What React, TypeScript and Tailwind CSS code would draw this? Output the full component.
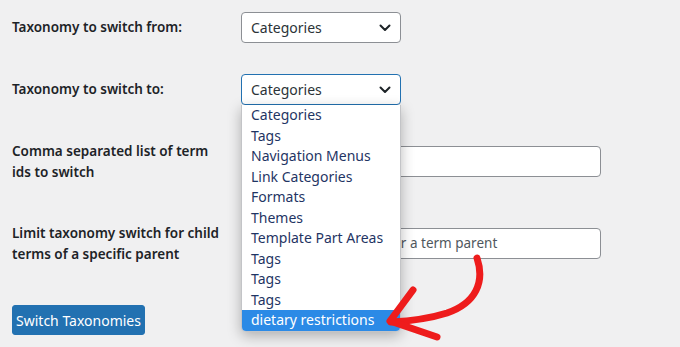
import React from "react";

const options = [
  "Categories",
  "Tags",
  "Navigation Menus",
  "Link Categories",
  "Formats",
  "Themes",
  "Template Part Areas",
  "Tags",
  "Tags",
  "Tags",
  "dietary restrictions",
];

const Chevron = () => (
  <svg width="12" height="8" viewBox="0 0 12 8" fill="none">
    <path d="M1.5 1.5 6 6l4.5-4.5" stroke="#1d2327" strokeWidth="2" strokeLinecap="round" strokeLinejoin="round" />
  </svg>
);

const Select = ({ focused }: { focused?: boolean }) => (
  <div
    className={
      focused
        ? "flex h-[31px] w-[160px] items-center justify-between rounded-[4px] border-[1.5px] border-[#2271b1] bg-white pl-[9px] pr-[9px] text-[14px] text-[#2c3338]"
        : "flex h-[31px] w-[160px] items-center justify-between rounded-[4px] border border-[#8c8f94] bg-white pl-[9px] pr-[9px] text-[14px] text-[#2c3338]"
    }
  >
    <span>Categories</span>
    <Chevron />
  </div>
);

const Row = ({ label, children, className }: { label: React.ReactNode; children: React.ReactNode; className: string }) => (
  <div className={"flex items-center " + className}>
    <div className="w-[229px] text-[13.5px] font-semibold leading-[20.5px] text-[#1d2327]">{label}</div>
    {children}
  </div>
);

export default function App() {
  return (
    <div
      className="relative h-[347px] w-[680px] overflow-hidden bg-[#f0f0f1] pl-[12px] pt-[12px]"
      style={{ fontFamily: '"Noto Sans", "Open Sans", sans-serif' }}
    >
      <Row label="Taxonomy to switch from:" className="h-[31px]">
        <Select />
      </Row>
      <Row label="Taxonomy to switch to:" className="mt-[31px] h-[31px]">
        <Select focused />
      </Row>
      <Row label={<>Comma separated list of term<br />ids to switch</>} className="mt-[36px] h-[41px]">
        <div className="h-[31px] w-[360px] rounded-[4px] border border-[#8c8f94] bg-white" />
      </Row>
      <Row label={<>Limit taxonomy switch for child<br />terms of a specific parent</>} className="mt-[41px] h-[41px]">
        <div className="flex h-[31px] w-[360px] items-center overflow-hidden whitespace-nowrap rounded-[4px] border border-[#8c8f94] bg-white pl-[19px] text-[13.5px] text-[#50575e]">
          Enter the ID or slug for a term parent
        </div>
      </Row>
      <button className="mt-[41px] h-[30px] w-[133px] rounded-[3px] border border-[#2271b1] bg-[#2271b1] text-[14px] text-white">
        Switch Taxonomies
      </button>

      <ul className="absolute left-[241px] top-[105px] w-[160px] overflow-hidden rounded-b-[5px] border border-t-0 border-[#c3c4c7] bg-white text-[14px] leading-[20.5px] text-[#1f3564] shadow-[0_4px_14px_rgba(0,0,0,0.28)]">
        {options.map((o, i) => (
          <li
            key={i}
            className={
              i === options.length - 1
                ? "bg-[#2b8ae6] px-[9px] text-white"
                : "px-[9px]"
            }
          >
            {o}
          </li>
        ))}
      </ul>

      <svg className="absolute left-0 top-0" width="680" height="347" viewBox="0 0 680 347" fill="none">
        <path
          d="M477 258 C485 282 476 303 447 313 C428 319 410 321 391 322"
          stroke="#ee1c1c"
          strokeWidth="7"
          strokeLinecap="round"
        />
        <path
          d="M413 290 L390 321 L437 337"
          stroke="#ee1c1c"
          strokeWidth="7"
          strokeLinecap="round"
          strokeLinejoin="round"
        />
      </svg>
    </div>
  );
}
